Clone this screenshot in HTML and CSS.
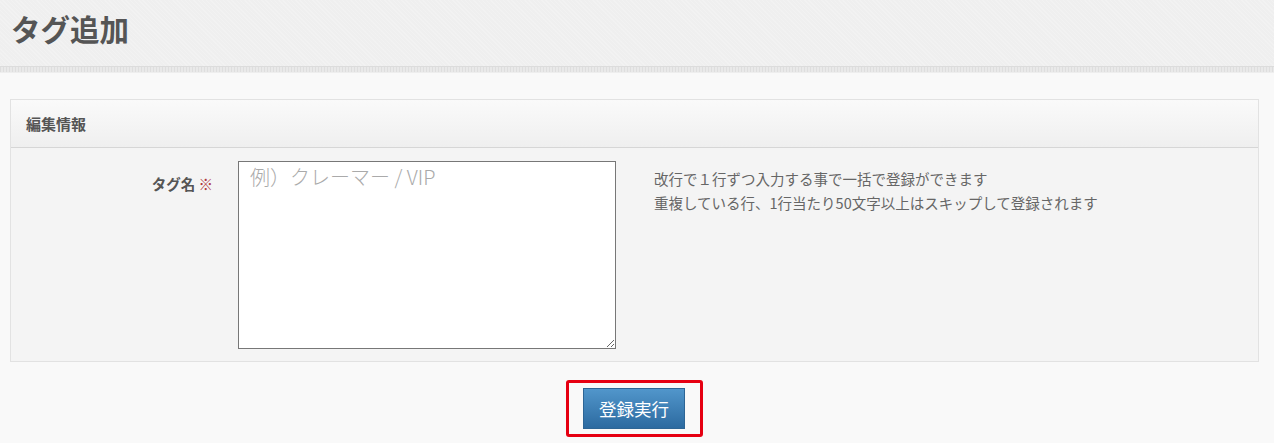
FILE: index.html
```html
<!DOCTYPE html>
<html lang="ja">
<head>
<meta charset="utf-8">
<title>タグ追加</title>
<link rel="stylesheet" href="styles.css">
</head>
<body>
<header class="page-header">
  <h1 class="page-title">タグ追加</h1>
</header>
<div class="header-band"></div>
<main class="content">
  <section class="panel">
    <div class="panel-head">編集情報</div>
    <div class="panel-body">
      <div class="form-row">
        <label class="form-label" for="tagname">タグ名 <span class="req">※</span></label>
        <textarea id="tagname" class="tag-input" placeholder="例）クレーマー / VIP"></textarea>
        <div class="help">
          <p>改行で１行ずつ入力する事で一括で登録ができます</p>
          <p>重複している行、1行当たり50文字以上はスキップして登録されます</p>
        </div>
      </div>
    </div>
  </section>
  <div class="actions">
    <div class="highlight">
      <button class="btn-submit" type="button">登録実行</button>
    </div>
  </div>
</main>
</body>
</html>
```

FILE: styles.css
```css
* { box-sizing: border-box; }
html, body { margin: 0; padding: 0; }
body {
  background: #f9f9f9;
  font-family: "Noto Sans CJK JP", "Noto Sans", "Liberation Sans", sans-serif;
  color: #555;
  width: 1274px;
  height: 443px;
  overflow: hidden;
}
.page-header {
  height: 66px;
  padding: 10px 11px 0;
  background-color: #efefef;
  background-image: repeating-linear-gradient(45deg, rgba(255,255,255,0.18) 0 1px, transparent 1px 3px);
}
.page-title {
  margin: 0;
  font-size: 29.5px;
  line-height: 36px;
  font-weight: bold;
  color: #555;
}
.header-band {
  height: 7px;
  border-top: 1px solid #dcdcdc;
  border-bottom: 1px solid #eeeeee;
  background-color: #e4e4e4;
  background-image: repeating-linear-gradient(90deg, #dedede 0 1px, #e9e9e9 1px 3px);
}
.content {
  padding: 26px 15px 0 10px;
}
.panel {
  border: 1px solid #e2e2e2;
}
.panel-head {
  height: 48px;
  padding: 0 15px;
  display: flex;
  align-items: center;
  font-size: 15px;
  font-weight: bold;
  color: #555;
  background: linear-gradient(#fafafa, #efefef);
  border-bottom: 1px solid #d6d6d6;
}
.panel-body {
  background: #f4f4f4;
  padding: 13px 0 12px;
}
.form-row {
  display: flex;
  align-items: flex-start;
}
.form-label {
  width: 202px;
  flex: none;
  text-align: right;
  padding-top: 13px;
  font-size: 14.5px;
  line-height: 20px;
  font-weight: bold;
  color: #555;
}
.req {
  color: #b03a3a;
  font-weight: normal;
}
.tag-input {
  flex: none;
  margin-left: 25px;
  width: 378px;
  height: 188px;
  border: 1px solid #777;
  background: #fff;
  padding: 3px 11px;
  font-family: "Noto Sans CJK JP", "Liberation Sans", sans-serif;
  font-size: 20px;
  font-weight: 300;
  line-height: 24px;
  color: #333;
  resize: both;
}
.tag-input::placeholder { color: #aaaaaa; }
.help {
  margin-left: 38px;
  padding-top: 6px;
  font-size: 14.5px;
  line-height: 24px;
  color: #666;
}
.help p { margin: 0; }
.actions {
  display: flex;
  justify-content: center;
  padding-top: 18px;
}
.highlight {
  border: 3px solid #e60012;
  border-radius: 3px;
  padding: 5px 15px 5px 14px;
}
.btn-submit {
  display: block;
  width: 102px;
  height: 41px;
  border: 1px solid #2d6595;
  background: linear-gradient(#5196cb, #2c6aa0);
  color: #fff;
  font-family: "Noto Sans CJK JP", "Liberation Sans", sans-serif;
  font-size: 17.5px;
  padding: 0;
  cursor: pointer;
}
```
